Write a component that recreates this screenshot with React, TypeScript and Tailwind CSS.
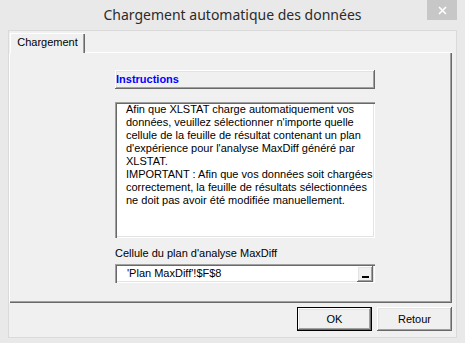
const raised =
  "shadow-[inset_-1px_-1px_0_#696969,inset_1px_1px_0_#ffffff,inset_-2px_-2px_0_#a0a0a0,inset_2px_2px_0_#e3e3e3]";
const sunken =
  "shadow-[inset_1px_1px_0_#a0a0a0,inset_2px_2px_0_#696969,inset_-1px_-1px_0_#ffffff,inset_-2px_-2px_0_#e3e3e3]";

const instructions = [
  "Afin que XLSTAT charge automatiquement vos",
  "données, veuillez sélectionner n'importe quelle",
  "cellule de la feuille de résultat contenant un plan",
  "d'expérience pour l'analyse MaxDiff généré par",
  "XLSTAT.",
  "IMPORTANT : Afin que vos données soit chargées",
  "correctement, la feuille de résultats sélectionnées",
  "ne doit pas avoir été modifiée manuellement.",
];

const App = () => {
  return (
    <div className="w-[465px] h-[343px] bg-[#e9e9e9] flex flex-col font-['Liberation_Sans',sans-serif] text-[11px] text-black">
      {/* title bar */}
      <div className="h-[30px] flex items-start">
        <div className="w-[38px]" />
        <div className="flex-1 pt-[5px] text-center text-[14px] text-[#2b2b2b] font-['Noto_Sans',sans-serif] leading-[20px]">
          Chargement automatique des données
        </div>
        <div className="w-[30px] h-[20px] mr-[8px] bg-[#c7c7c7] flex items-center justify-center">
          <svg width="9" height="9" viewBox="0 0 9 9">
            <path d="M1 1 L8 8 M8 1 L1 8" stroke="#ffffff" strokeWidth="1.6" />
          </svg>
        </div>
      </div>

      {/* client area */}
      <div className="mx-[8px] mb-[5px] flex-1 bg-[#f0f0f0] border border-[#dadada] flex flex-col">
        {/* tab strip */}
        <div className="h-[21px] mt-[1px] flex items-end pl-[1px]">
          <div className="h-[20px] w-[75px] flex items-center justify-center bg-[#f0f0f0] shadow-[inset_1px_1px_0_#ffffff,inset_-1px_0_0_#696969,inset_-2px_0_0_#a0a0a0]">
            <span className="leading-none pb-[1px]">Chargement</span>
          </div>
          <div className="flex-1 h-[1px] bg-white mr-[4px]" />
        </div>

        {/* tab page */}
        <div className="mr-[4px] h-[250px] shadow-[inset_1px_0_0_#ffffff,inset_-1px_-1px_0_#696969,inset_-2px_-2px_0_#a0a0a0] flex flex-col items-start pl-[106px] pt-[17px]">
          <div className={`w-[260px] h-[19px] ${raised} flex items-center pl-[1px]`}>
            <span className="font-bold text-[#0000ff]">Instructions</span>
          </div>

          <div className={`mt-[13px] w-[260px] h-[136px] bg-white ${sunken} pl-[11px] pt-[1px] leading-[13px] whitespace-nowrap`}>
            {instructions.map((line, i) => (
              <div key={i}>{line}</div>
            ))}
          </div>

          <div className="mt-[9px] leading-[13px]">Cellule du plan d'analyse MaxDiff</div>

          <div className={`mt-[4px] w-[260px] h-[19px] bg-white ${sunken} flex items-center pl-[12px] pr-[2px]`}>
            <span className="flex-1 leading-none">'Plan MaxDiff'!$F$8</span>
            <div className={`w-[16px] h-[16px] bg-[#f0f0f0] ${raised} flex items-end justify-center pb-[4px]`}>
              <div className="w-[7px] h-[2px] bg-black" />
            </div>
          </div>
        </div>

        {/* buttons */}
        <div className="flex justify-end gap-[5px] mr-[4px] mt-[4px]">
          <button className={`w-[75px] h-[24px] bg-[#f0f0f0] border border-black ${raised}`}>OK</button>
          <button className={`w-[75px] h-[24px] bg-[#f0f0f0] ${raised}`}>Retour</button>
        </div>
      </div>
    </div>
  );
};

export default App;
